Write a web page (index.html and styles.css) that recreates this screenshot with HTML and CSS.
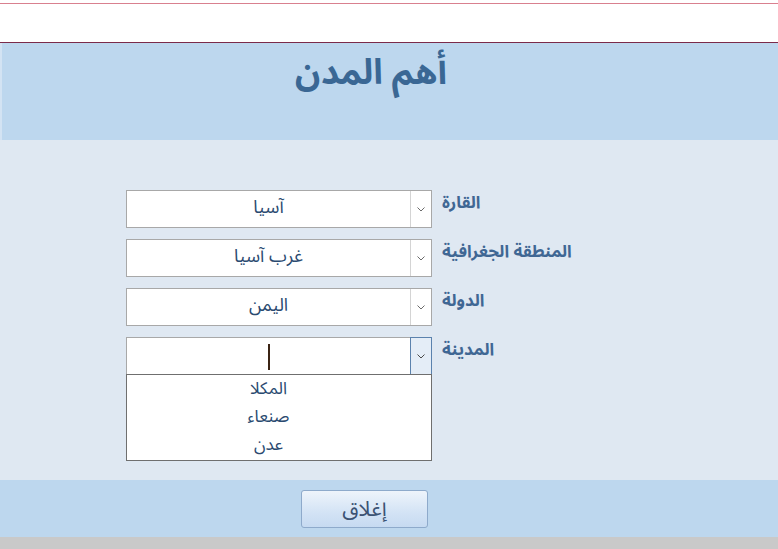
FILE: index.html
```html
<!DOCTYPE html>
<html lang="ar" dir="rtl">
<head>
<meta charset="utf-8">
<title>أهم المدن</title>
<link rel="stylesheet" href="styles.css">
</head>
<body>
<div class="topbar"><div class="topline"></div></div>
<header class="header">
  <h1 class="title">أهم المدن</h1>
</header>
<main class="body">
  <div class="form">
    <div class="label">القارة</div>
    <div class="select">
      <div class="btn"><svg width="8" height="5" viewBox="0 0 8 5"><path d="M0.5 0.5 L4 4 L7.5 0.5" fill="none" stroke="#6b6b6b" stroke-width="1"/></svg></div>
      <div class="value">آسيا</div>
    </div>

    <div class="label">المنطقة الجغرافية</div>
    <div class="select">
      <div class="btn"><svg width="8" height="5" viewBox="0 0 8 5"><path d="M0.5 0.5 L4 4 L7.5 0.5" fill="none" stroke="#6b6b6b" stroke-width="1"/></svg></div>
      <div class="value">غرب آسيا</div>
    </div>

    <div class="label">الدولة</div>
    <div class="select">
      <div class="btn"><svg width="8" height="5" viewBox="0 0 8 5"><path d="M0.5 0.5 L4 4 L7.5 0.5" fill="none" stroke="#6b6b6b" stroke-width="1"/></svg></div>
      <div class="value">اليمن</div>
    </div>

    <div class="label">المدينة</div>
    <div class="select open">
      <div class="btn focus"><svg width="8" height="5" viewBox="0 0 8 5"><path d="M0.5 0.5 L4 4 L7.5 0.5" fill="none" stroke="#4a4a4a" stroke-width="1"/></svg></div>
      <div class="value"><span class="caret"></span></div>
      <ul class="list">
        <li>المكلا</li>
        <li>صنعاء</li>
        <li>عدن</li>
      </ul>
    </div>
  </div>
</main>
<footer class="footer">
  <button class="close">إغلاق</button>
</footer>
<div class="bottombar"></div>
</body>
</html>
```
FILE: styles.css
```css
* { box-sizing: border-box; }
html, body { margin: 0; padding: 0; }
body {
  width: 778px;
  height: 549px;
  overflow: hidden;
  background: #ffffff;
  font-family: "Noto Sans Arabic", "DejaVu Sans", "Liberation Sans", sans-serif;
}
.topbar {
  height: 43px;
  padding-top: 3px;
  background: #ffffff;
  border-bottom: 1px solid #7b2b4a;
}
.topline {
  height: 1px;
  background: #d9808f;
}
.header {
  height: 97px;
  background: #bdd7ee;
  border-left: 2px solid #d3e3f3;
}
.title {
  margin: 0;
  padding: 4px 38px 0 0;
  text-align: center;
  font-size: 35px;
  font-weight: bold;
  color: #3a6794;
  line-height: 52px;
}
.body {
  height: 340px;
  background: #dfe8f2;
  padding-top: 50px;
  direction: ltr;
}
.form {
  display: grid;
  grid-template-columns: 306px auto;
  column-gap: 10px;
  row-gap: 11px;
  padding-left: 126px;
}
.form > .select { grid-column: 1; }
.form > .label { grid-column: 2; }
.label {
  direction: rtl;
  text-align: left;
  justify-self: start;
  font-size: 17px;
  font-weight: bold;
  color: #3f6794;
  line-height: 22px;
  padding-top: 2px;
}
.select {
  position: relative;
  height: 38px;
  background: #ffffff;
  border: 1px solid #a8a8a8;
  display: flex;
  flex-direction: row-reverse;
}
.form .label:nth-child(1) { grid-row: 1; }
.form .select:nth-child(2) { grid-row: 1; }
.form .label:nth-child(3) { grid-row: 2; }
.form .select:nth-child(4) { grid-row: 2; }
.form .label:nth-child(5) { grid-row: 3; }
.form .select:nth-child(6) { grid-row: 3; }
.form .label:nth-child(7) { grid-row: 4; }
.form .select:nth-child(8) { grid-row: 4; }
.btn {
  width: 21px;
  border-left: 1px solid #d4d4d4;
  display: flex;
  align-items: center;
  justify-content: center;
  background: #ffffff;
}
.btn.focus {
  border: 1px solid #5b82ad;
  background: #e4edf7;
  margin: -1px -1px -1px 0;
  width: 22px;
}
.value {
  flex: 1;
  direction: rtl;
  text-align: center;
  font-size: 18px;
  color: #2a4a70;
  line-height: 32px;
  position: relative;
}
.caret {
  display: inline-block;
  width: 2px;
  height: 26px;
  background: #3b2414;
  vertical-align: middle;
  margin-top: 4px;
}
.list {
  position: absolute;
  left: -1px;
  right: -1px;
  top: 36px;
  height: 87px;
  margin: 0;
  padding: 0 21px 0 0;
  list-style: none;
  background: #ffffff;
  border: 1px solid #6f6f6f;
  direction: rtl;
}
.list li {
  height: 28px;
  line-height: 28px;
  text-align: center;
  font-size: 17px;
  color: #2a4a70;
}
.footer {
  height: 57px;
  background: #bdd7ee;
  padding-top: 10px;
  direction: ltr;
  padding-left: 301px;
}
.close {
  width: 127px;
  height: 38px;
  border: 1px solid #8eaacb;
  border-radius: 3px;
  background: linear-gradient(#eef4fb, #d3e3f5 60%, #c6daf1);
  font-family: inherit;
  font-size: 21px;
  line-height: 34px;
  color: #3b5273;
  padding: 0;
}
.bottombar {
  height: 13px;
  background: #c9c9c9;
}
```
